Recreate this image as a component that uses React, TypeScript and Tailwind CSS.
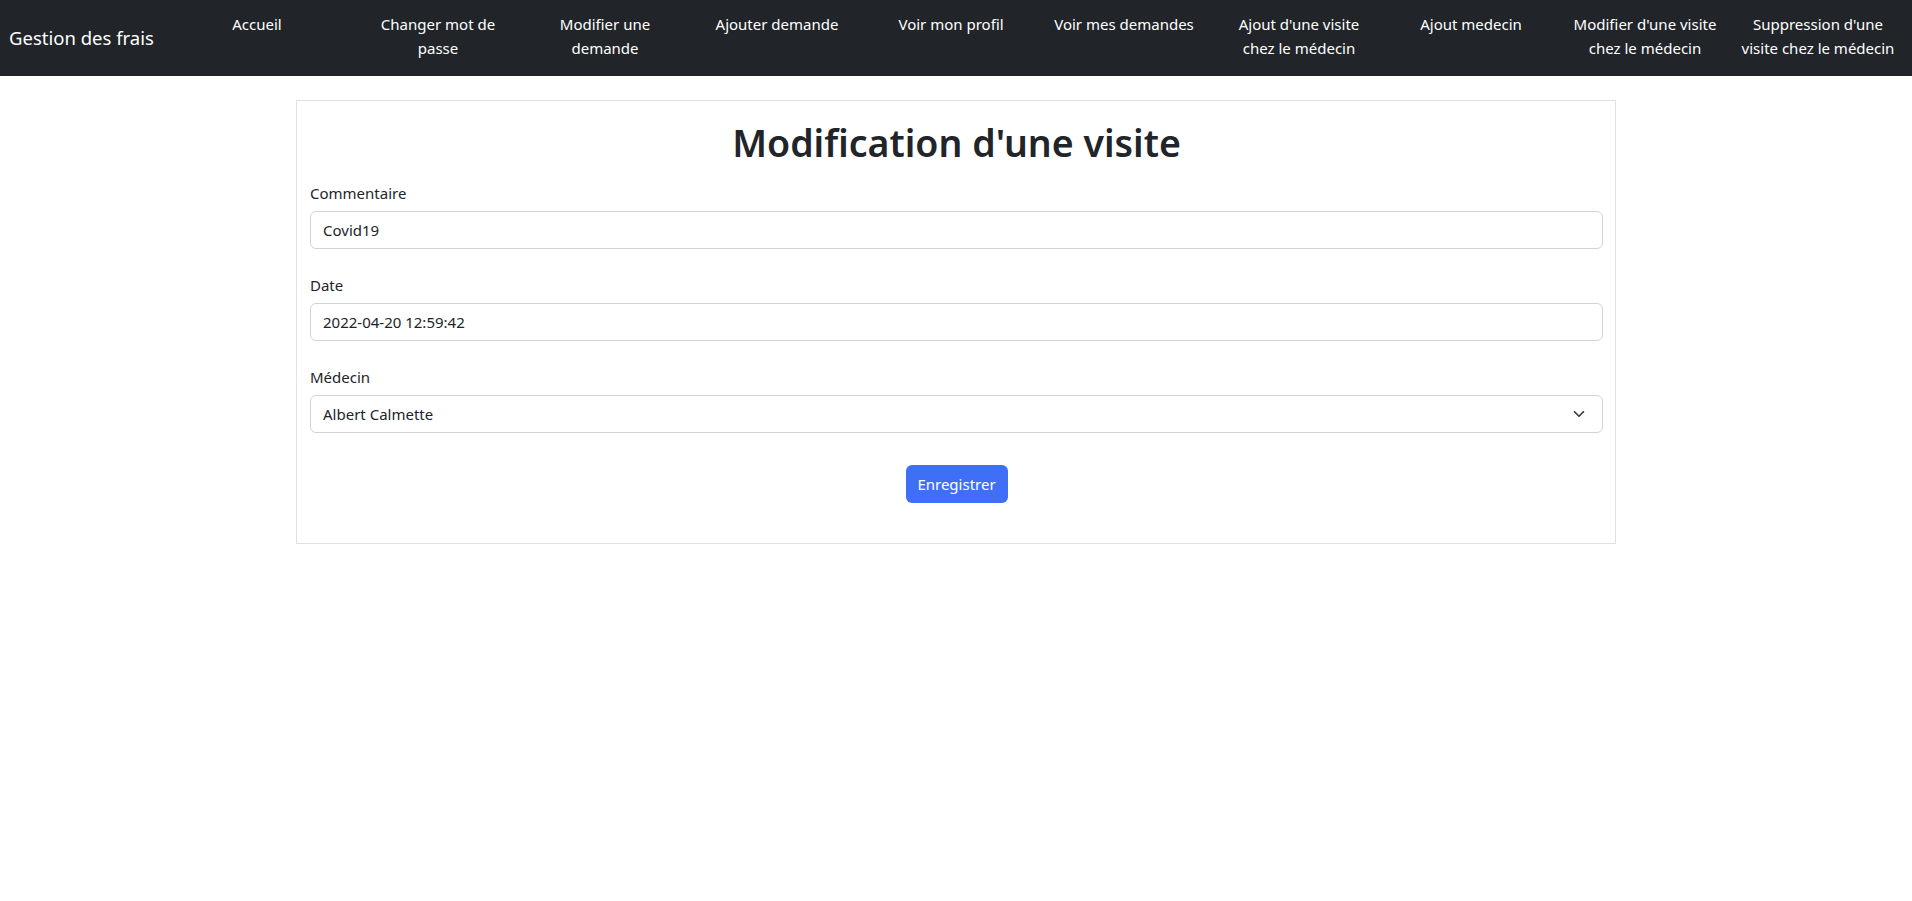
import { ChevronDown } from "lucide-react";

const links: { w: string; lines: string[] }[] = [
  { w: "w-[174px]", lines: ["Accueil"] },
  { w: "w-[188px]", lines: ["Changer mot de", "passe"] },
  { w: "w-[146px]", lines: ["Modifier une", "demande"] },
  { w: "w-[198px]", lines: ["Ajouter demande"] },
  { w: "w-[150px]", lines: ["Voir mon profil"] },
  { w: "w-[196px]", lines: ["Voir mes demandes"] },
  { w: "w-[154px]", lines: ["Ajout d'une visite", "chez le médecin"] },
  { w: "w-[190px]", lines: ["Ajout medecin"] },
  { w: "w-[158px]", lines: ["Modifier d'une visite", "chez le médecin"] },
  { w: "w-[188px]", lines: ["Suppression d'une", "visite chez le médecin"] },
];

const font = { fontFamily: '"Segoe UI", "Noto Sans", "Open Sans", sans-serif' };

export default function App() {
  return (
    <div className="min-h-screen bg-white text-[#212529]" style={font}>
      {/* Navbar */}
      <nav className="flex h-[76px] bg-[#212529] pl-[9px]">
        <a className="mr-[15px] flex w-[146px] shrink-0 items-center whitespace-nowrap text-[18.5px] text-white">
          Gestion des frais
        </a>
        <ul className="flex items-start pt-[12px]">
          {links.map((l, i) => (
            <li
              key={i}
              className={`${l.w} shrink-0 text-center text-[15px] leading-[24px] whitespace-nowrap text-white`}
            >
              {l.lines.map((line, j) => (
                <div key={j}>{line}</div>
              ))}
            </li>
          ))}
        </ul>
      </nav>

      {/* Card */}
      <main className="mx-auto mt-[24px] w-[1320px] border border-[#dee2e6] pr-[12px] pb-[40px] pl-[13px]">
        <h1 className="pt-[18px] pb-[14px] text-center text-[37.5px] leading-[48px] font-semibold">
          Modification d'une visite
        </h1>

        <div className="mb-[24px]">
          <label className="mb-[6px] block text-[15px] leading-[24px]">Commentaire</label>
          <input
            defaultValue="Covid19"
            className="h-[38px] w-full rounded-[6px] border border-[#ced4da] px-[12px] text-[15px] outline-none"
          />
        </div>

        <div className="mb-[24px]">
          <label className="mb-[6px] block text-[15px] leading-[24px]">Date</label>
          <input
            defaultValue="2022-04-20 12:59:42"
            className="h-[38px] w-full rounded-[6px] border border-[#ced4da] px-[12px] text-[15px] outline-none"
          />
        </div>

        <div className="mb-[32px]">
          <label className="mb-[6px] block text-[15px] leading-[24px]">Médecin</label>
          <div className="flex h-[38px] w-full items-center justify-between rounded-[6px] border border-[#ced4da] pr-[14px] pl-[12px] text-[15px]">
            <span>Albert Calmette</span>
            <ChevronDown className="h-[18px] w-[18px] text-[#343a40]" strokeWidth={2.2} />
          </div>
        </div>

        <div className="flex justify-center">
          <button className="h-[38px] w-[102px] rounded-[6px] bg-[#3f6ef7] text-[15px] text-white">
            Enregistrer
          </button>
        </div>
      </main>
    </div>
  );
}
